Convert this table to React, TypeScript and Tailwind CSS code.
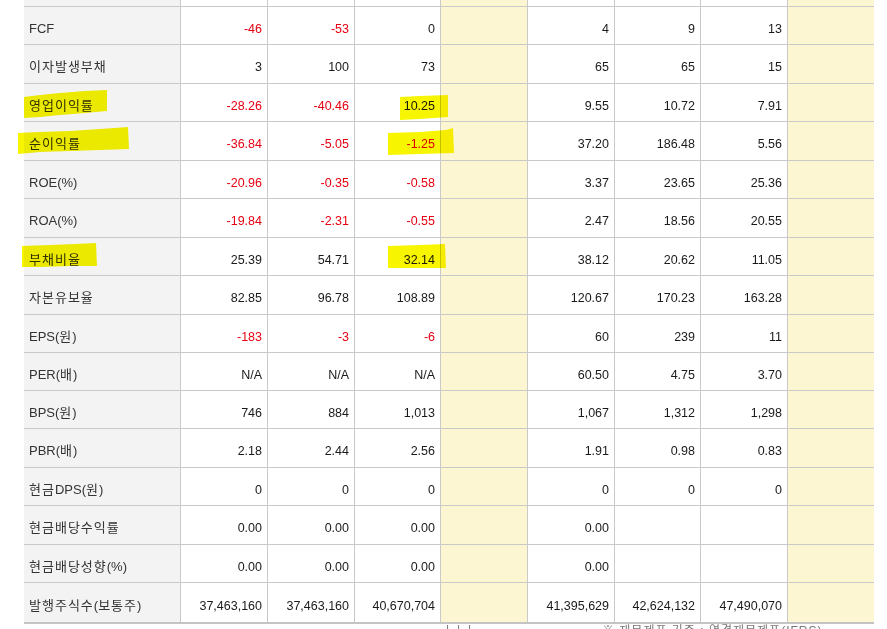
import React from "react";

type Row = { label: string; vals: string[]; h: string };

const rowHeights = [
  "h-[38px]", "h-[39px]", "h-[38px]", "h-[39px]", "h-[38px]", "h-[39px]", "h-[38px]", "h-[39px]",
  "h-[38px]", "h-[38px]", "h-[38px]", "h-[39px]", "h-[38px]", "h-[39px]", "h-[38px]", "h-[41px]",
];

const data: [string, string[]][] = [
  ["FCF", ["-46", "-53", "0", "", "4", "9", "13", ""]],
  ["이자발생부채", ["3", "100", "73", "", "65", "65", "15", ""]],
  ["영업이익률", ["-28.26", "-40.46", "10.25", "", "9.55", "10.72", "7.91", ""]],
  ["순이익률", ["-36.84", "-5.05", "-1.25", "", "37.20", "186.48", "5.56", ""]],
  ["ROE(%)", ["-20.96", "-0.35", "-0.58", "", "3.37", "23.65", "25.36", ""]],
  ["ROA(%)", ["-19.84", "-2.31", "-0.55", "", "2.47", "18.56", "20.55", ""]],
  ["부채비율", ["25.39", "54.71", "32.14", "", "38.12", "20.62", "11.05", ""]],
  ["자본유보율", ["82.85", "96.78", "108.89", "", "120.67", "170.23", "163.28", ""]],
  ["EPS(원)", ["-183", "-3", "-6", "", "60", "239", "11", ""]],
  ["PER(배)", ["N/A", "N/A", "N/A", "", "60.50", "4.75", "3.70", ""]],
  ["BPS(원)", ["746", "884", "1,013", "", "1,067", "1,312", "1,298", ""]],
  ["PBR(배)", ["2.18", "2.44", "2.56", "", "1.91", "0.98", "0.83", ""]],
  ["현금DPS(원)", ["0", "0", "0", "", "0", "0", "0", ""]],
  ["현금배당수익률", ["0.00", "0.00", "0.00", "", "0.00", "", "", ""]],
  ["현금배당성향(%)", ["0.00", "0.00", "0.00", "", "0.00", "", "", ""]],
  ["발행주식수(보통주)", ["37,463,160", "37,463,160", "40,670,704", "", "41,395,629", "42,624,132", "47,490,070", ""]],
];

const rows: Row[] = data.map(([label, vals], i) => ({ label, vals, h: rowHeights[i] }));

const colW = ["w-[87px]", "w-[87px]", "w-[86px]", "w-[87px]", "w-[87px]", "w-[86px]", "w-[87px]", "w-[86px]"];
const yellow = [false, false, false, true, false, false, false, true];

function Label({ text }: { text: string }) {
  const parts = text.split(/([\uAC00-\uD7A3]+)/).filter((p) => p.length > 0);
  return (
    <span className="whitespace-nowrap">
      {parts.map((p, i) =>
        /[\uAC00-\uD7A3]/.test(p) ? (
          <span key={i} className="text-[13px] tracking-[1px]">
            {p}
          </span>
        ) : (
          <span key={i} className="text-[13px]">{p}</span>
        )
      )}
    </span>
  );
}

export default function App() {
  const font = { fontFamily: '"Liberation Sans", "Noto Sans CJK KR", sans-serif' };
  return (
    <div className="relative w-[887px] h-[629px] overflow-hidden bg-white" style={font}>
      <div className="pl-[24px]">
        <div className="w-[850px]">
          {/* partial top row */}
          <div className="flex h-[7px] border-b border-[#c9c9c9]">
            <div className="w-[157px] shrink-0 bg-[#f3f3f3] border-r border-[#c9c9c9]" />
            {colW.map((w, j) => (
              <div
                key={j}
                className={`${w} shrink-0 ${yellow[j] ? "bg-[#fdf6d2]" : "bg-white"} ${j < 7 ? "border-r border-[#c9c9c9]" : ""}`}
              />
            ))}
          </div>
          {rows.map((r, i) => (
            <div
              key={i}
              className={`flex ${r.h} ${i === rows.length - 1 ? "border-b-2 border-[#c4c4c4]" : "border-b border-[#c9c9c9]"}`}
            >
              <div className="w-[157px] shrink-0 bg-[#f3f3f3] border-r border-[#c9c9c9] flex items-center pl-[5px] pt-[6px] text-[12.5px] text-[#333]">
                <Label text={r.label} />
              </div>
              {colW.map((w, j) => {
                const v = r.vals[j];
                const red = v.startsWith("-");
                return (
                  <div
                    key={j}
                    className={`${w} shrink-0 flex items-center justify-end pr-[5px] pt-[7px] text-[12.5px] ${
                      yellow[j] ? "bg-[#fdf6d2]" : "bg-white"
                    } ${j < 7 ? "border-r border-[#c9c9c9]" : ""} ${red ? "text-[#e60012]" : "text-[#1a1a1a]"}`}
                  >
                    {v}
                  </div>
                );
              })}
            </div>
          ))}
        </div>
      </div>
      {/* cut-off footnote line */}
      <div className="flex h-[5px] overflow-hidden text-[12px] leading-[14px] text-[#777]">
        <div className="w-[442px] shrink-0" />
        <div className="w-[160px] shrink-0 whitespace-nowrap">ㅣㅣㅣ</div>
        <div className="whitespace-nowrap tracking-[1px]">※ 재무제표 기준 : 연결재무제표(IFRS)</div>
      </div>
      {/* highlighter marks */}
      <svg
        className="absolute top-0 left-0 w-[887px] h-[629px] pointer-events-none mix-blend-multiply"
        viewBox="0 0 887 629"
      >
        <g fill="#f7f500">
          <polygon points="24,97 40,95 60,93 85,91 107,90 107,111 85,113 60,115 40,117 24,118" />
          <polygon points="18,133 40,132 70,131 100,129 128,127 129,149 100,150 70,151 40,152 18,154" />
          <polygon points="400,97 420,96 448,95 448,117 420,119 400,120" />
          <polygon points="388,133 420,132 446,130 453,128 454,153 420,154 388,155" />
          <polygon points="22,246 50,245 75,244 96,243 97,266 70,266 40,267 22,267" />
          <polygon points="388,246 420,245 445,244 446,268 420,268 388,268" />
        </g>
      </svg>
    </div>
  );
}
